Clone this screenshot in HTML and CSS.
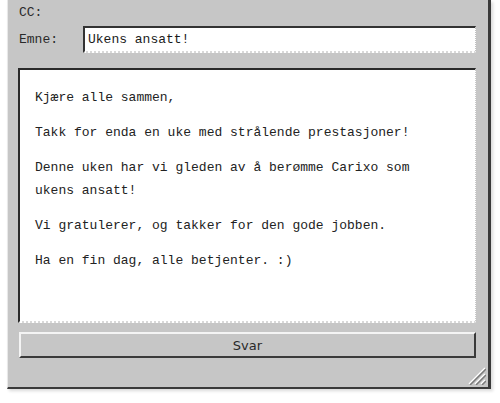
FILE: index.html
```html
<!DOCTYPE html>
<html lang="no">
<head>
<meta charset="utf-8">
<title>Svar</title>
<link rel="stylesheet" href="styles.css">
</head>
<body>
<div class="window">
  <div class="row cc-row"><span class="label">CC:</span></div>
  <div class="row subject-row">
    <span class="label">Emne:</span>
    <div class="field">Ukens ansatt!</div>
  </div>
  <div class="message">
    <p>Kjære alle sammen,</p>
    <p>Takk for enda en uke med strålende prestasjoner!</p>
    <p>Denne uken har vi gleden av å berømme Carixo som ukens ansatt!</p>
    <p>Vi gratulerer, og takker for den gode jobben.</p>
    <p>Ha en fin dag, alle betjenter. :)</p>
  </div>
  <button class="reply">Svar</button>
  <div class="grip">
    <svg width="20" height="20" viewBox="0 0 20 20">
      <path d="M19 3 L3 19 M19 9 L9 19 M19 15 L15 19" stroke="#ffffff" stroke-width="1.5"/>
      <path d="M20 4 L4 20 M20 10 L10 20 M20 16 L16 20" stroke="#7a7a7a" stroke-width="1.5"/>
    </svg>
  </div>
</div>
</body>
</html>
```
FILE: styles.css
```css
html, body {
  margin: 0;
  padding: 0;
  background: #ffffff;
}

body {
  width: 500px;
  height: 403px;
  overflow: hidden;
}

.window {
  position: relative;
  box-sizing: border-box;
  margin-left: 7px;
  width: 484px;
  height: 389px;
  background: #c6c6c6;
  border-left: 1px solid #e8e8e8;
  border-right: 3px solid #3a3a3a;
  border-bottom: 2px solid #3a3a3a;
  box-shadow: 2px 2px 3px rgba(0, 0, 0, 0.15);
  padding: 0 12px 0 10px;
  display: flex;
  flex-direction: column;
}

.row {
  display: flex;
  align-items: center;
}

.label {
  font-family: "Liberation Mono", "DejaVu Sans Mono", monospace;
  font-size: 13px;
  color: #2a2a2a;
  width: 64px;
  flex: none;
}

.cc-row {
  height: 24px;
  margin-top: 2px;
  align-items: flex-start;
  padding-top: 3px;
  box-sizing: border-box;
  padding-left: 1px;
}

.subject-row {
  height: 27px;
  padding-left: 1px;
}

.field {
  flex: 1;
  box-sizing: border-box;
  height: 27px;
  background: #ffffff;
  border-top: 2px solid #333333;
  border-left: 2px solid #333333;
  border-right: 1px dotted #c0c0c0;
  border-bottom: 2px dotted #d8d8d8;
  padding: 3px 0 0 3px;
  font-family: "Liberation Mono", "DejaVu Sans Mono", monospace;
  font-size: 13px;
  line-height: 18px;
  color: #1a1a1a;
}

.message {
  margin-top: 15px;
  height: 255px;
  box-sizing: border-box;
  background: #ffffff;
  border-top: 2px solid #2a2a2a;
  border-left: 2px solid #2a2a2a;
  border-right: 1px dotted #c8c8c8;
  border-bottom: 2px dotted #d8d8d8;
  padding: 16px 30px 0 15px;
  font-family: "Liberation Mono", "DejaVu Sans Mono", monospace;
  font-size: 13px;
  line-height: 23px;
  color: #222222;
}

.message p {
  margin: 0 0 12px 0;
}

.reply {
  margin-top: 9px;
  margin-left: 1px;
  height: 26px;
  box-sizing: border-box;
  background: #c6c6c6;
  border-top: 2px solid #f4f4f4;
  border-left: 2px solid #f4f4f4;
  border-right: 2px solid #3a3a3a;
  border-bottom: 2px solid #3a3a3a;
  font-family: "DejaVu Sans", "Liberation Sans", sans-serif;
  font-size: 13px;
  color: #2a2a2a;
  padding: 0;
}

.grip {
  position: absolute;
  right: 2px;
  bottom: 2px;
  width: 20px;
  height: 20px;
}
```
